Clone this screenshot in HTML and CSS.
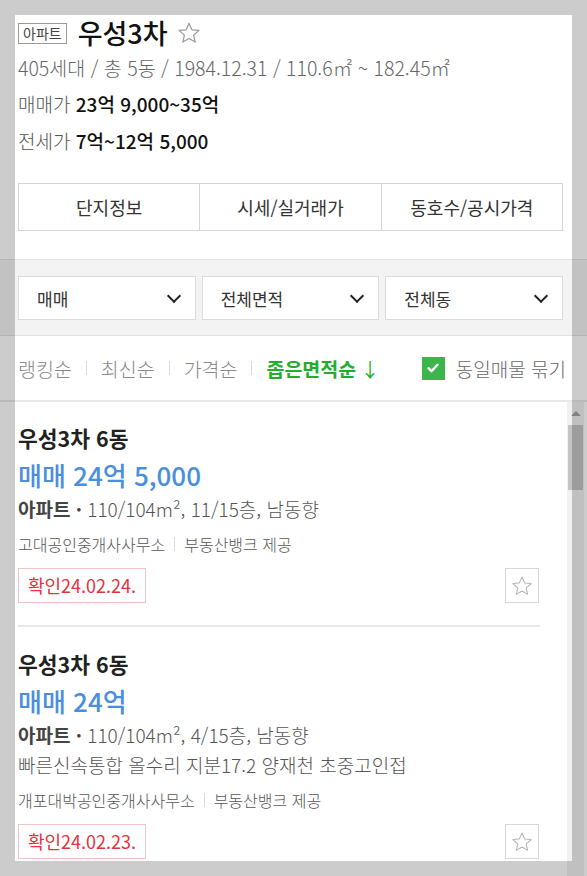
FILE: index.html
```html
<!DOCTYPE html>
<html lang="ko">

<head>
    <meta charset="UTF-8" />
    <meta name="viewport" content="width=device-width,initial-scale=1.0" />
    <title>우성3차</title>
    <link rel="stylesheet" href="styles.css">
</head>

<body>
    <div class="page">
        <div class="complex">
            <div class="complex-title">
                <span class="type-tag">아파트</span>
                <h1 class="complex-name">우성3차</h1>
                <svg class="fav-star" width="24" height="24" viewBox="0 0 24 24">
                    <path d="M12 2.2l2.9 6.6 7.1.6-5.4 4.7 1.6 7-6.2-3.7-6.2 3.7 1.6-7L2 9.4l7.1-.6z" fill="none" stroke="#9a9a9a" stroke-width="1.2" stroke-linejoin="round" />
                </svg>
            </div>
            <div class="complex-info">405세대 / 총 5동 / 1984.12.31 / 110.6㎡ ~ 182.45㎡</div>
            <div class="price-row"><span class="price-label">매매가</span> <b>23억 9,000~35억</b></div>
            <div class="price-row"><span class="price-label">전세가</span> <b>7억~12억 5,000</b></div>
            <div class="tabs">
                <button class="tab">단지정보</button>
                <button class="tab">시세/실거래가</button>
                <button class="tab">동호수/공시가격</button>
            </div>
        </div>

        <div class="filters">
            <div class="select">매매 <span class="chevron"></span></div>
            <div class="select">전체면적 <span class="chevron"></span></div>
            <div class="select">전체동 <span class="chevron"></span></div>
        </div>

        <div class="sort-bar">
            <div class="sort-list">
                <span class="sort-item">랭킹순</span>
                <span class="sort-item">최신순</span>
                <span class="sort-item">가격순</span>
                <span class="sort-item active">좁은면적순 <span class="arrow">↓</span></span>
            </div>
            <label class="group-check">
                <span class="checkbox">
                    <svg width="14" height="14" viewBox="0 0 14 14">
                        <path d="M2.5 7.2l3 3 6-6.4" fill="none" stroke="#fff" stroke-width="2.4" stroke-linecap="round" stroke-linejoin="round" />
                    </svg>
                </span>
                동일매물 묶기
            </label>
        </div>

        <div class="list-wrap">
            <div class="article-list">
                <div class="article">
                    <div class="article-title">우성3차 6동</div>
                    <div class="article-price">매매 24억 5,000</div>
                    <div class="article-spec"><b>아파트 ·</b> 110/104m², 11/15층, 남동향</div>
                    <div class="article-agent">고대공인중개사사무소<span class="bar"></span>부동산뱅크 제공</div>
                    <div class="article-foot">
                        <span class="confirm">확인24.02.24.</span>
                        <span class="star-box">
                            <svg width="22" height="22" viewBox="0 0 24 24">
                                <path d="M12 2.2l2.9 6.6 7.1.6-5.4 4.7 1.6 7-6.2-3.7-6.2 3.7 1.6-7L2 9.4l7.1-.6z" fill="none" stroke="#b5b5b5" stroke-width="1.1" stroke-linejoin="round" />
                            </svg>
                        </span>
                    </div>
                </div>
                <div class="article">
                    <div class="article-title">우성3차 6동</div>
                    <div class="article-price">매매 24억</div>
                    <div class="article-spec"><b>아파트 ·</b> 110/104m², 4/15층, 남동향</div>
                    <div class="article-desc">빠른신속통합 올수리 지분17.2 양재천 초중고인접</div>
                    <div class="article-agent">개포대박공인중개사사무소<span class="bar"></span>부동산뱅크 제공</div>
                    <div class="article-foot">
                        <span class="confirm">확인24.02.23.</span>
                        <span class="star-box">
                            <svg width="22" height="22" viewBox="0 0 24 24">
                                <path d="M12 2.2l2.9 6.6 7.1.6-5.4 4.7 1.6 7-6.2-3.7-6.2 3.7 1.6-7L2 9.4l7.1-.6z" fill="none" stroke="#b5b5b5" stroke-width="1.1" stroke-linejoin="round" />
                            </svg>
                        </span>
                    </div>
                </div>
            </div>
            <div class="scrollbar">
                <div class="scroll-up"></div>
                <div class="scroll-thumb"></div>
            </div>
        </div>
    </div>
    <div class="frame"></div>
</body>

</html>
```

FILE: styles.css
```css
body {
    margin: 0;
    font-family: "Noto Sans CJK KR", "Noto Sans", sans-serif;
    background: #fff;
    color: #222;
    overflow: hidden;
}

.page {
    width: 587px;
    height: 876px;
    display: flex;
    flex-direction: column;
}

.light {
    font-family: "Noto Sans CJK KR Light", "Noto Sans CJK KR", sans-serif;
}

/* 단지 헤더 */
.complex {
    padding: 17px 24px 28px 18px;
    border-bottom: 1px solid #e2e2e2;
}

.complex-title {
    display: flex;
    align-items: center;
    height: 32px;
}

.type-tag {
    border: 1px solid #999;
    font-size: 14px;
    line-height: 19px;
    padding: 0 4px;
    color: #444;
}

.complex-name {
    margin: 0 0 0 11px;
    font-size: 27px;
    font-weight: 500;
    line-height: 32px;
    color: #111;
}

.fav-star {
    margin-left: 9px;
}

.complex-info {
    margin-top: 6px;
    margin-bottom: 4px;
    font-family: "Noto Sans CJK KR Light", "Noto Sans CJK KR", sans-serif;
    font-size: 19.5px;
    font-weight: 300;
    line-height: 26px;
    color: #666;
    white-space: nowrap;
}

.price-row {
    font-size: 19px;
    line-height: 37px;
    color: #111;
}

.price-label {
    font-family: "Noto Sans CJK KR Light", "Noto Sans CJK KR", sans-serif;
    font-weight: 300;
    color: #555;
}

.price-row b {
    font-weight: 500;
}

.tabs {
    margin-top: 24px;
    display: flex;
    border: 1px solid #d5d5d5;
    height: 46px;
}

.tab {
    flex: 1;
    border: none;
    border-left: 1px solid #d5d5d5;
    background: #fff;
    font-family: inherit;
    font-size: 18px;
    color: #333;
    padding: 0;
}

.tab:first-child {
    border-left: none;
}

/* 필터 */
.filters {
    background: #f3f3f3;
    padding: 16px 24px 15px 18px;
    display: flex;
    gap: 6px;
    border-bottom: 1px solid #e2e2e2;
}

.select {
    flex: 1;
    height: 42px;
    background: #fff;
    border: 1px solid #dcdcdc;
    display: flex;
    align-items: center;
    justify-content: space-between;
    padding: 0 16px 0 18px;
    font-size: 17px;
    color: #333;
}

.chevron {
    width: 8px;
    height: 8px;
    border-right: 2px solid #222;
    border-bottom: 2px solid #222;
    transform: rotate(45deg);
    margin-top: -5px;
}

/* 정렬 */
.sort-bar {
    height: 64px;
    display: flex;
    align-items: center;
    justify-content: space-between;
    padding: 0 21px 0 18px;
    border-bottom: 2px solid #e8e8e8;
}

.sort-list {
    display: flex;
    align-items: center;
}

.sort-item {
    font-family: "Noto Sans CJK KR Light", "Noto Sans CJK KR", sans-serif;
    font-size: 19.5px;
    font-weight: 300;
    color: #888;
    display: flex;
    align-items: center;
}

.sort-item + .sort-item::before {
    content: "";
    width: 1px;
    height: 14px;
    background: #dcdcdc;
    margin: 0 14px;
}

.sort-item.active {
    font-family: "Noto Sans CJK KR", sans-serif;
    color: #1fae2e;
    font-weight: 700;
}

.arrow {
    font-weight: 400;
    margin-left: 4px;
}

.group-check {
    display: flex;
    align-items: center;
    font-family: "Noto Sans CJK KR Light", "Noto Sans CJK KR", sans-serif;
    font-size: 19px;
    font-weight: 300;
    color: #666;
}

.checkbox {
    width: 23px;
    height: 23px;
    background: #3cb54a;
    display: flex;
    align-items: center;
    justify-content: center;
    margin-right: 11px;
}

/* 매물 목록 */
.list-wrap {
    flex: 1;
    display: flex;
    min-height: 0;
}

.article-list {
    flex: 1;
    overflow: hidden;
}

.scrollbar {
    width: 17px;
    margin-right: 3px;
    background: #f1f1f1;
}

.scroll-up {
    height: 22px;
    display: flex;
    justify-content: center;
    align-items: center;
}

.scroll-up::before {
    content: "";
    border-left: 5px solid transparent;
    border-right: 5px solid transparent;
    border-bottom: 5px solid #a3a3a3;
}

.scroll-thumb {
    margin: 1px 1px 0 1px;
    height: 65px;
    background: #c4c4c4;
}

.article {
    margin: 0 27px 0 18px;
    padding: 22px 0 22px;
    border-bottom: 2px solid #e8e8e8;
}

.article + .article {
    padding-top: 23px;
}

.article-title {
    font-size: 21.5px;
    font-weight: 700;
    line-height: 28px;
    color: #222;
}

.article-price {
    margin-top: 5px;
    font-size: 26px;
    font-weight: 500;
    line-height: 36px;
    color: #4a8fdd;
}

.article-spec,
.article-desc {
    margin-top: 3px;
    font-family: "Noto Sans CJK KR Light", "Noto Sans CJK KR", sans-serif;
    font-size: 19px;
    font-weight: 300;
    line-height: 26px;
    color: #555;
    white-space: nowrap;
}

.article-desc {
    margin-top: 4px;
}

.article-spec b {
    font-family: "Noto Sans CJK KR", sans-serif;
    font-weight: 700;
    color: #444;
}

.article-agent {
    margin-top: 11px;
    font-family: "Noto Sans CJK KR Light", "Noto Sans CJK KR", sans-serif;
    font-size: 16px;
    font-weight: 300;
    line-height: 22px;
    color: #555;
    display: flex;
    align-items: center;
}

.bar {
    width: 1px;
    height: 14px;
    background: #dcdcdc;
    margin: 0 9px;
}

.article-foot {
    margin-top: 13px;
    display: flex;
    align-items: center;
    justify-content: space-between;
}

.confirm {
    border: 1px solid #f2c3c7;
    color: #e3323d;
    font-size: 18px;
    line-height: 33px;
    padding: 0 9px;
}

.star-box {
    width: 32px;
    height: 33px;
    border: 1px solid #d8d8d8;
    display: flex;
    align-items: center;
    justify-content: center;
    margin-right: 1px;
}

/* 캡처 테두리 */
.frame {
    position: fixed;
    inset: 0;
    border: 15px solid rgba(0, 0, 0, 0.2);
    pointer-events: none;
}
```
